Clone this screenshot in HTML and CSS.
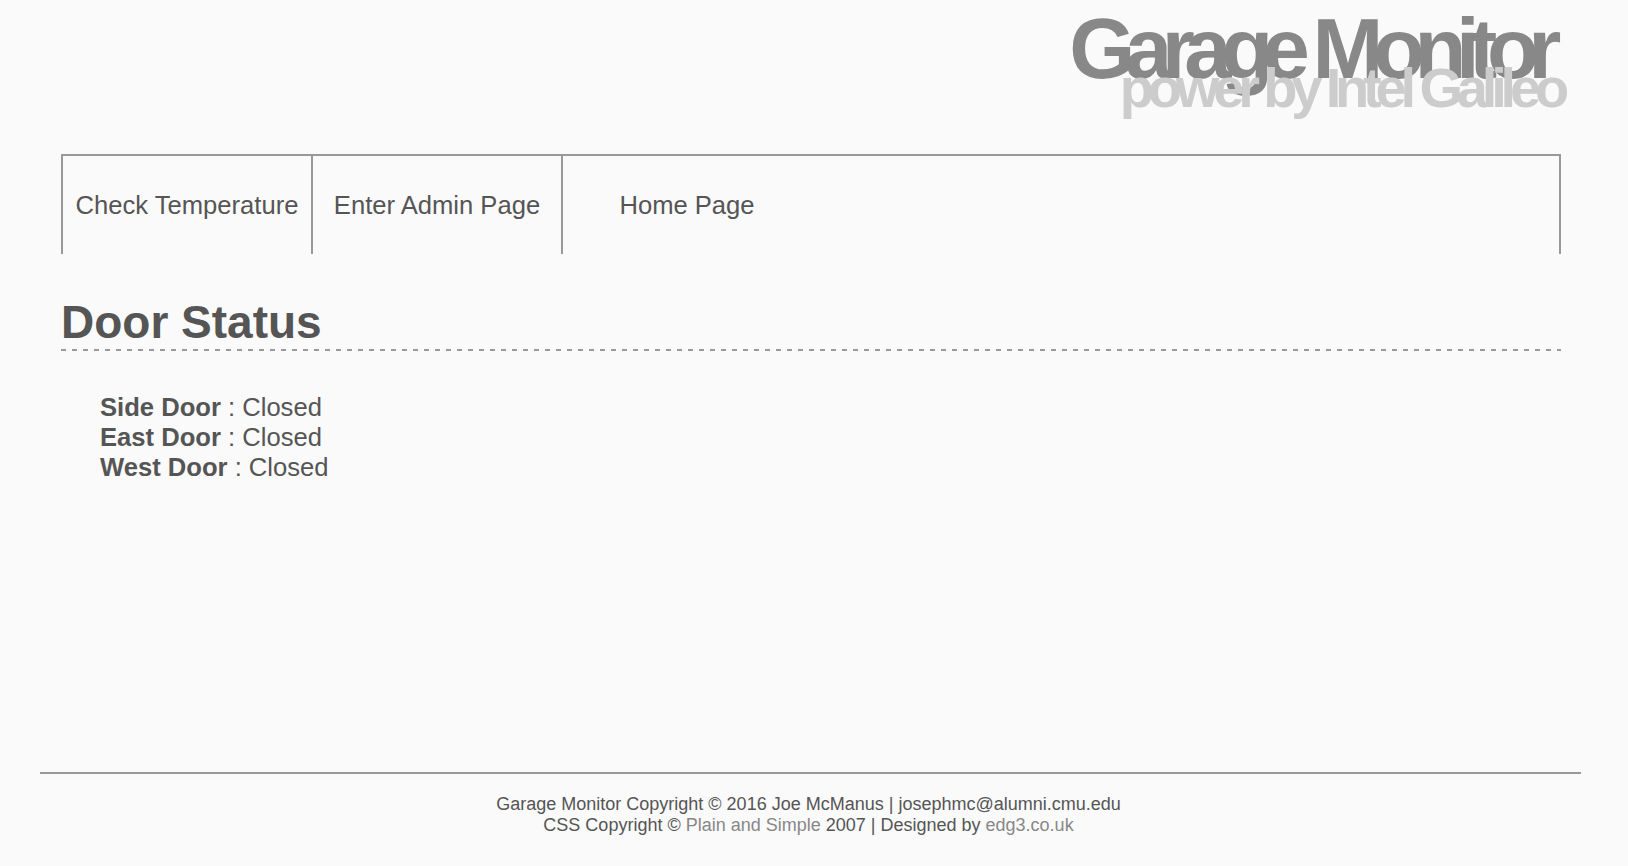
FILE: index.html
```html
<!DOCTYPE html>
<html>
<head>
<meta charset="utf-8">
<title>Garage Monitor</title>
<link rel="stylesheet" href="styles.css">
</head>
<body>
<div class="page">
  <header class="header">
    <h1 class="title">Garage Monitor</h1>
    <div class="subtitle">power by Intel Galileo</div>
  </header>
  <nav class="nav">
    <a class="nav-item" href="#">Check Temperature</a>
    <a class="nav-item" href="#">Enter Admin Page</a>
    <a class="nav-item last" href="#">Home Page</a>
  </nav>
  <main class="content">
    <h2 class="section-title">Door Status</h2>
    <ul class="doors">
      <li><b>Side Door</b> : Closed</li>
      <li><b>East Door</b> : Closed</li>
      <li><b>West Door</b> : Closed</li>
    </ul>
  </main>
  <footer class="footer">
    <p>Garage Monitor Copyright © 2016 Joe McManus | josephmc@alumni.cmu.edu</p>
    <p>CSS Copyright © <a href="#">Plain and Simple</a> 2007 | Designed by <a href="#">edg3.co.uk</a></p>
  </footer>
</div>
</body>
</html>
```
FILE: styles.css
```css
html, body {
  margin: 0;
  padding: 0;
  background: #fafafa;
}
body {
  font-family: "Liberation Sans", Arial, Helvetica, sans-serif;
  color: #555;
}
.page {
  width: 1500px;
  margin: 0 0 0 61px;
}
.header {
  text-align: right;
  padding-top: 6px;
}
.title {
  margin: 0;
  font-size: 85px;
  line-height: 85px;
  font-weight: bold;
  letter-spacing: -0.123em;
  color: #888;
  padding-right: 10px;
}
.subtitle {
  margin-top: -31px;
  margin-right: -2px;
  font-size: 56px;
  line-height: 56px;
  font-weight: bold;
  letter-spacing: -0.11em;
  color: #ccc;
  position: relative;
}
.nav {
  margin-top: 38px;
  height: 98px;
  border: 2px solid #999;
  border-bottom: none;
  display: flex;
}
.nav-item {
  width: 248px;
  border-right: 2px solid #999;
  display: flex;
  align-items: center;
  justify-content: center;
  font-size: 25.6px;
  color: #555;
  text-decoration: none;
}
.nav-item.last {
  border-right: none;
}
.content {
  display: flow-root;
  height: 518px;
}
.section-title {
  margin: 42px 0 0 0;
  font-size: 46px;
  line-height: 52px;
  font-weight: bold;
  padding-bottom: 3px;
  background: repeating-linear-gradient(to right, #999 0 5px, transparent 5px 11px) left bottom / 100% 2px no-repeat;
}
.doors {
  list-style: none;
  margin: 41px 0 0 0;
  padding: 0 0 0 39px;
  font-size: 25.6px;
  line-height: 30px;
}
.footer {
  margin: 0 -20px 0 -21px;
  border-top: 2px solid #999;
  padding: 20px 4px 0 0;
  text-align: center;
  font-size: 18px;
}
.footer p {
  margin: 0;
  line-height: 21px;
}
.footer a {
  color: #888;
  text-decoration: none;
}
```
